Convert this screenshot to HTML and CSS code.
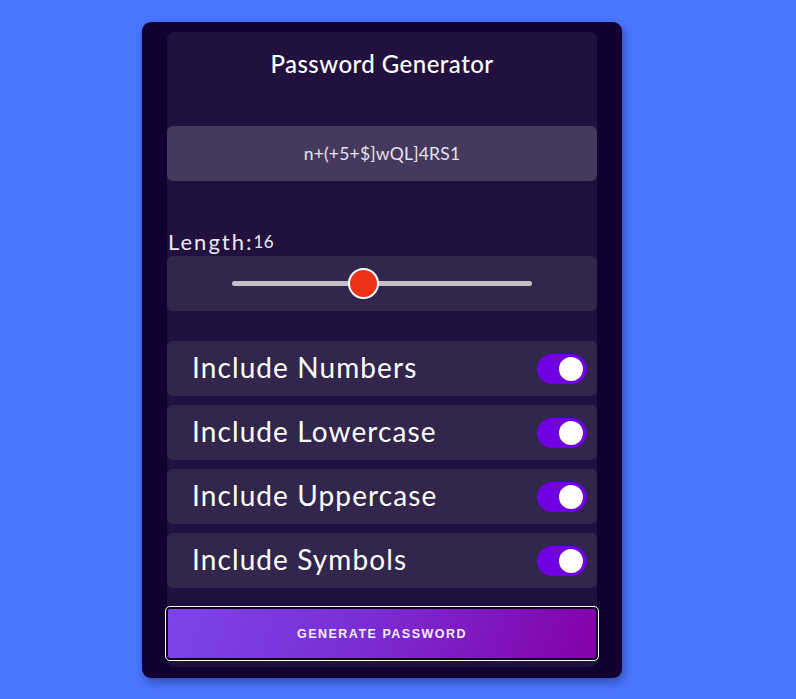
FILE: index.html
```html
<!DOCTYPE html>
<html>
<head>
<meta charset="utf-8">
<link rel="stylesheet" href="styles.css">
</head>
<body>
<div class="card">
  <div class="panel">
    <h2 class="title">Password Generator</h2>
    <div class="result">n+(+5+$]wQL]4RS1</div>
    <div class="length-label">Length:<span class="length-value">16</span></div>
    <div class="slider-box">
      <div class="track">
        <div class="thumb" style="left: 38.7%"></div>
      </div>
    </div>
    <div class="options">
      <div class="option"><span class="option-text">Include Numbers</span><span class="toggle"><span class="knob"></span></span></div>
      <div class="option"><span class="option-text">Include Lowercase</span><span class="toggle"><span class="knob"></span></span></div>
      <div class="option"><span class="option-text">Include Uppercase</span><span class="toggle"><span class="knob"></span></span></div>
      <div class="option"><span class="option-text">Include Symbols</span><span class="toggle"><span class="knob"></span></span></div>
    </div>
    <button class="generate">Generate Password</button>
  </div>
</div>
</body>
</html>
```

FILE: styles.css
```css
* { box-sizing: border-box; }
html, body { margin: 0; padding: 0; }
body {
  background: #4a76fe;
  font-family: Lato, "Open Sans", sans-serif;
  display: flex;
  justify-content: center;
  padding: 22px 32px 0 0;
  height: 699px;
  overflow: hidden;
}
.card {
  width: 480px;
  height: 656px;
  background: #130033;
  border-radius: 9px;
  padding: 10px 25px 0;
  box-shadow: 2px 4px 8px rgba(0, 0, 40, 0.35);
}
.panel {
  background: #22103f;
  border-radius: 8px;
  height: 635px;
  display: flex;
  flex-direction: column;
}
.title {
  margin: 0;
  padding-top: 18px;
  height: 94px;
  text-align: center;
  color: #fff;
  font-size: 24px;
  font-weight: 500;
  line-height: 28px;
  letter-spacing: 0.45px;
}
.result {
  height: 55px;
  background: #453a5e;
  border-radius: 6px;
  display: flex;
  align-items: center;
  justify-content: center;
  color: #e6e2ee;
  font-size: 17.5px;
  letter-spacing: 0.2px;
}
.length-label {
  margin-top: 47px;
  height: 28px;
  line-height: 28px;
  color: #ece8f4;
  font-size: 22px;
  letter-spacing: 2px;
  padding-left: 1px;
}
.length-value { font-size: 17px; letter-spacing: 0.5px; vertical-align: 2px; }
.slider-box {
  height: 55px;
  background: #33264d;
  border-radius: 6px;
  display: flex;
  align-items: center;
  justify-content: center;
}
.track {
  position: relative;
  width: 300px;
  height: 5px;
  border-radius: 3px;
  background: #c2c0c8;
}
.thumb {
  position: absolute;
  top: 50%;
  width: 31px;
  height: 31px;
  margin-top: -15.5px;
  border-radius: 50%;
  background: #ee3219;
  border: 2px solid #fff;
}
.options {
  margin-top: 30px;
  display: flex;
  flex-direction: column;
  gap: 9px;
}
.option {
  height: 55px;
  background: #33264d;
  border-radius: 6px;
  display: flex;
  align-items: center;
  justify-content: space-between;
  padding: 0 10px 0 25px;
}
.option-text {
  color: #fff;
  font-size: 28px;
  font-weight: 400;
  letter-spacing: 1.1px;
  margin-top: -3px;
}
.toggle {
  width: 50px;
  height: 30px;
  border-radius: 15px;
  background: #7000e0;
  position: relative;
  display: block;
}
.knob {
  position: absolute;
  right: 4px;
  top: 3px;
  width: 24px;
  height: 24px;
  border-radius: 50%;
  background: #fff;
}
.generate {
  margin: 19px -1px 0;
  height: 53px;
  border: 2px solid #0c0020;
  outline: 1px solid #fff;
  border-radius: 4px;
  background: linear-gradient(110deg, #7d44ea 0%, #7a2ed4 45%, #8400a8 100%);
  color: #f4eeff;
  font-family: "Liberation Sans", Arial, sans-serif;
  font-weight: bold;
  font-size: 12.5px;
  letter-spacing: 1.5px;
  text-transform: uppercase;
}
```
